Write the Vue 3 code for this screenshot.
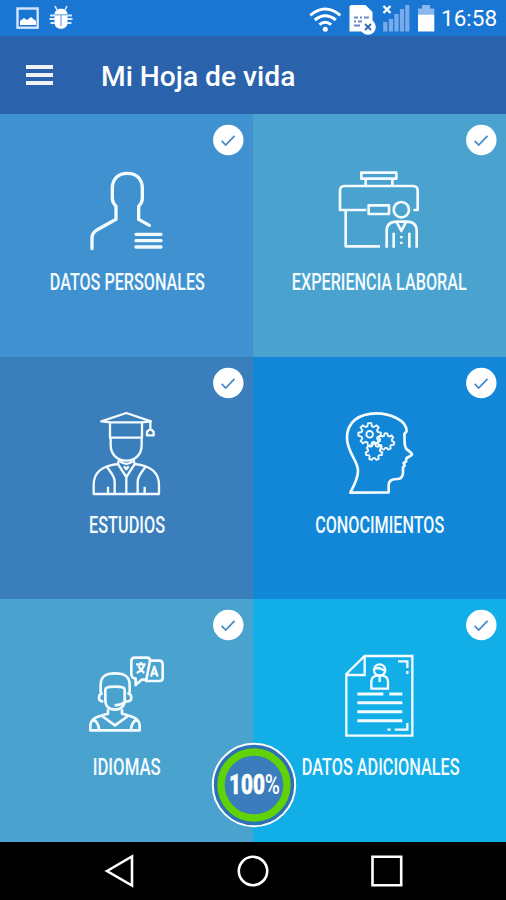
<template>
  <div class="app">
    <!-- Barra de estado -->
    <div class="status-bar">
      <svg class="status-left" width="60" height="36" viewBox="0 0 60 36">
        <rect x="2.5" y="8.500" width="20.200" height="19.200" fill="none" stroke="#d4e4fb" stroke-width="2.4" />
        <path d="M5 25v-4l4-3 3 2 4-3 5 4v4z" fill="#fff" />
        <path d="M39.500 14.400c0-7.500 13-7.500 13 0zM39.500 15.200h13v7.500c0 8-13 8-13 0z" fill="#fff" />
        <path d="M42 10l-2-4M50 10l2-4" stroke="#dceaff" stroke-width="1.600" />
        <path d="M40 15.500h-5M40 19h-5.500M52 15.500h5M52 19h5.500M40 23h-4.500M52 23h4.500" stroke="#dceaff" stroke-width="1.800" />
        <path d="M46 15v11" stroke="#6f9fe8" stroke-width="1.200" />
      </svg>
      <svg class="status-right" width="130" height="36" viewBox="0 0 130 36">
        <g fill="none" stroke="#fff" stroke-width="3">
          <path d="M1.300 15.300q15-12.500 30 0" />
          <path d="M5.800 20q10.500-8.500 21 0" />
          <path d="M10.400 24.600q5.900-4.700 11.800 0" />
        </g>
        <circle cx="16.300" cy="29.200" r="2.500" fill="#fff" />
        <path d="M42 5h14.500l7 7v19.500H40.500V6.500z" fill="#fff" />
        <path d="M45 17.500h4M51 17.500h2M55 17.500h5M45 21.500h2M49 21.500h4M45 25.500h6" stroke="#6d88c6" stroke-width="2" />
        <circle cx="59" cy="27" r="7.800" fill="#fff" />
        <path d="M56 24l6 6M62 24l-6 6" stroke="#2d69b8" stroke-width="1.800" />
        <path d="M74.500 6l7 7M81.500 6l-7 7" stroke="#fff" stroke-width="2.400" />
        <path d="M76.300 31.500v-9.500M82 31.500v-12.500M87.500 31.500V14M93 31.500V9M98.300 31.500V5" stroke="#77abea" stroke-width="4.200" />
        <path d="M109 8.500h4V5h8v3.500h4.300v6H109z" fill="#8ab7ed" />
        <path d="M109 14.500h16.300v17H109z" fill="#fff" />
      </svg>
      <span class="clock">16:58</span>
    </div>

    <!-- Encabezado -->
    <header class="toolbar">
      <div class="menu">
        <span></span>
        <span></span>
        <span></span>
      </div>
      <h1 class="title">Mi Hoja de vida</h1>
    </header>

    <!-- Secciones -->
    <main class="grid">
      <section v-for="s in secciones" :key="s.id" class="tile" :class="s.id">
        <svg class="check" width="32" height="32" viewBox="0 0 32 32">
          <circle cx="16.300" cy="16" r="15.200" fill="#fff" />
          <path d="M9.700 16.800l4 4.200 8.800-9.200" fill="none" stroke="#4289c8" stroke-width="1.700" />
        </svg>

        <svg class="icon" width="85" height="86" :viewBox="s.box">
          <g v-if="s.id === 'personales'" stroke-width="10" stroke-linecap="round">
            <path d="M156 398v-32c0-12 6-19 16-25l40-22 16-9v-39c-7-7-11-13-11-24v-30c0-29 18-45 45-45s45 16 45 45v30c0 11-4 17-11 24v39l32 18" />
            <path d="M288 355h75M288 374h75M288 393h75" />
          </g>
          <g v-else-if="s.id === 'experiencia'" stroke-width="8" stroke-linejoin="round">
            <path d="M244 170h105v18H244zM257 190v19M337 190v19" />
            <path d="M259 282h-79v-58q0-14 14-14h205q14 0 14 14v58h-13M197 284v107h103" />
            <path d="M266 268h61v26h-61z" />
            <circle cx="364" cy="281" r="23" />
            <path d="M320 395v-50q0-28 30-28h30q30 0 30 28v50M341 350v45M388 350v45M350 318l14 27 14-27" />
            <path d="M364 360v7M364 377v7" />
          </g>
          <g v-else-if="s.id === 'estudios'" stroke-width="7" stroke-linejoin="round">
            <path d="M184 184l75-25 74 25-28 3H212zM210 190v43h96v-43M212 233v22c0 28 20 47 47 47s46-19 46-47v-22" />
            <path d="M331 186v24M321 226v-10q10-15 20 0v10z" />
            <path d="M238 295l-4 17c-43 5-73 20-73 63v27h196v-27c0-43-30-58-73-63l-4-17" />
            <path d="M233 311l26 40 26-40M240 304q19 15 38 0M259 351v49M200 320c10 15 24 27 24 45v36M317 320c-10 15-24 27-24 45v36M204 380v20M314 380v20M252 319l7 9 7-9" />
          </g>
          <g v-else-if="s.id === 'conocimientos'">
            <path stroke-width="8" stroke-linejoin="round" d="M181 398c12-25 23-42 23-66 0-30-33-55-33-99 0-47 36-73 88-73 24 0 43 5 60 14 20 10 31 22 31 40l-7 8c2 20-2 31 5 43 6 8 16 11 18 18-3 6-12 8-17 12l-1 10-7 4 3 8-5 5v18q-2 17-18 17c-17 0-25 6-25 18v22z" />
            <g stroke-width="5.500">
              <path v-for="g in engranajes" :key="g.x" :d="engranaje(g)" />
              <circle cx="239" cy="223" r="10" />
            </g>
          </g>
          <g v-else-if="s.id === 'idiomas'" stroke-width="8" stroke-linejoin="round">
            <path d="M182 278v-23c0-25 13-35 43-35s44 10 44 35v23" />
            <path d="M196 278v-7c0-10 8-11 29-11s29 1 29 11v29c0 18-11 29-29 29s-29-11-29-29zM188 279q-11 3-11 14t13 11M262 279q12 3 12 14t-14 11l-20 10-16 2" />
            <path d="M204 328v13c-32 9-53 13-53 37v13h148v-13c0-24-21-28-53-37v-13M186 348l39 28 39-28M158 358q18 8 19 32M292 358q-18 8-19 32" />
            <path d="M285 173h36q9 0 9 9l-11 57h-14l-18 16v-19c-10-2-13-6-13-14v-38q0-11 11-11zM332 182h25q11 0 11 11v41q0 9-9 9h-44" />
            <path stroke-width="7" d="M288 193h29M303 186v7M290 219q19-9 22-25M295 198q8 15 18 21M333 230l10-30 10 30M337 221h13" />
          </g>
          <g v-else stroke-width="7">
            <path d="M224 168h143v239H169V222zM224 168v57h-55" />
            <path d="M324 184h28v20M352 213v9M292 389h10M314 389h38v-20" />
            <circle cx="269" cy="210" r="17" />
            <path d="M254 206l13-2 18 8M244 266v-22c0-13 10-18 25-18s25 5 25 18v22zM269 229v17" />
            <path stroke-width="9" d="M202 282h78M298 282h39M202 308h135M202 335h135M202 362h135" />
          </g>
        </svg>

        <svg class="label" width="253" height="30">
          <text :x="s.x" y="24.400" text-anchor="middle" :textLength="s.ancho" lengthAdjust="spacingAndGlyphs">{{ s.texto }}</text>
        </svg>
      </section>

      <svg class="progress" width="86" height="86" viewBox="0 0 86 86">
        <circle cx="43" cy="43" r="41.200" fill="#2c70b8" stroke="#fff" stroke-width="2" />
        <circle cx="43" cy="43" r="33" fill="#3a7cbc" stroke="#60d205" stroke-width="7.400" />
        <text x="18" y="51.500" textLength="51" lengthAdjust="spacingAndGlyphs" class="number">100<tspan class="percent">%</tspan></text>
      </svg>
    </main>

    <!-- Botones del sistema -->
    <nav class="nav-bar">
      <svg width="32" height="32" viewBox="0 0 32 32"><path d="M4 16L29 1.500v29z" /></svg>
      <svg width="32" height="32" viewBox="0 0 32 32"><circle cx="16" cy="16" r="14.200" /></svg>
      <svg width="32" height="32" viewBox="0 0 32 32"><path d="M1.500 1.700h28.700v28.600H1.500z" /></svg>
    </nav>
  </div>
</template>

<script setup>
const secciones = [
  { id: 'personales', texto: 'DATOS PERSONALES', x: 127.3, ancho: 155, box: '132 150 255 258' },
  { id: 'experiencia', texto: 'EXPERIENCIA LABORAL', x: 126.3, ancho: 175, box: '171 150 255 258' },
  { id: 'estudios', texto: 'ESTUDIOS', x: 127, ancho: 76, box: '132 147 255 258' },
  { id: 'conocimientos', texto: 'CONOCIMIENTOS', x: 126.7, ancho: 129, box: '141 147 255 258' },
  { id: 'idiomas', texto: 'IDIOMAS', x: 126.7, ancho: 68, box: '132 153 255 258' },
  { id: 'adicionales', texto: 'DATOS ADICIONALES', x: 127.7, ancho: 158, box: '141 153 255 258' },
];

const engranajes = [
  { x: 239, y: 223, r: 34, dientes: 8 },
  { x: 288, y: 245, r: 25, dientes: 7 },
  { x: 252, y: 276, r: 25, dientes: 7 },
];

// Contorno de un engranaje: cuatro puntos por diente
function engranaje({ x, y, r, dientes }) {
  const puntos = [];
  for (let i = 0; i < dientes; i++) {
    const base = (i / dientes) * Math.PI * 2 - Math.PI / 2;
    const paso = Math.PI / dientes;
    for (const [giro, radio] of [[-0.72, r * 0.74], [-0.35, r], [0.35, r], [0.72, r * 0.74]]) {
      const a = base + paso * giro;
      puntos.push(`${(x + Math.cos(a) * radio).toFixed(1)} ${(y + Math.sin(a) * radio).toFixed(1)}`);
    }
  }
  return `M${puntos.join('L')}Z`;
}
</script>

<style>
body {
  margin: 0;
  background: #000;
}
</style>

<style scoped>
.app {
  width: 506px;
  height: 900px;
  display: flex;
  flex-direction: column;
  overflow: hidden;
  font-family: Roboto, sans-serif;
  color: #fff;
}

svg {
  display: block;
  overflow: visible;
}

.status-bar {
  height: 36px;
  display: flex;
  align-items: center;
  background: #1976d2;
  padding: 0 9px 0 15px;
}

.status-right {
  margin-left: auto;
}

.clock {
  width: 56px;
  margin-left: 2px;
  font-size: 22.5px;
  line-height: 36px;
  white-space: nowrap;
}

.toolbar {
  height: 78px;
  display: flex;
  align-items: center;
  background: #2a63ab;
}

.menu {
  width: 27px;
  margin: 0 48px 1px 26px;
  display: flex;
  flex-direction: column;
  gap: 4px;
}

.menu span {
  height: 4px;
  background: #f1f0fb;
}

.title {
  margin: 0 0 -4px 0;
  font-size: 28.2px;
  font-weight: 500;
  line-height: 36px;
}

.grid {
  position: relative;
  height: 728px;
  display: grid;
  grid-template-columns: 253px 253px;
  grid-template-rows: 243px 242px 243px;
}

.tile {
  position: relative;
  display: flex;
  flex-direction: column;
  align-items: center;
}

.personales {
  background: #4091cf;
}

.experiencia {
  background: #4aa2cf;
}

.estudios {
  background: #3a7ebb;
}

.conocimientos {
  background: #1287d7;
}

.idiomas {
  background: #4aa2cf;
}

.adicionales {
  background: #12aee8;
}

.check {
  position: absolute;
  top: 10px;
  right: 9px;
}

.icon {
  margin-top: 52px;
  fill: none;
  stroke: #f4fbff;
}

.label {
  margin-top: 14px;
}

.label text {
  font-size: 24.5px;
  font-weight: 500;
  fill: #f4fbff;
}

.progress {
  position: absolute;
  left: 210.5px;
  top: 628px;
}

.number {
  font-size: 27px;
  font-weight: 900;
  fill: #fff;
  stroke: #fff;
  stroke-width: 0.5;
}

.percent {
  font-weight: 500;
  stroke: none;
}

.nav-bar {
  flex: 1;
  display: flex;
  justify-content: center;
  align-items: center;
  gap: 102px;
  background: #000;
}

.nav-bar svg {
  fill: none;
  stroke: #fff;
  stroke-width: 2.6;
}
</style>
